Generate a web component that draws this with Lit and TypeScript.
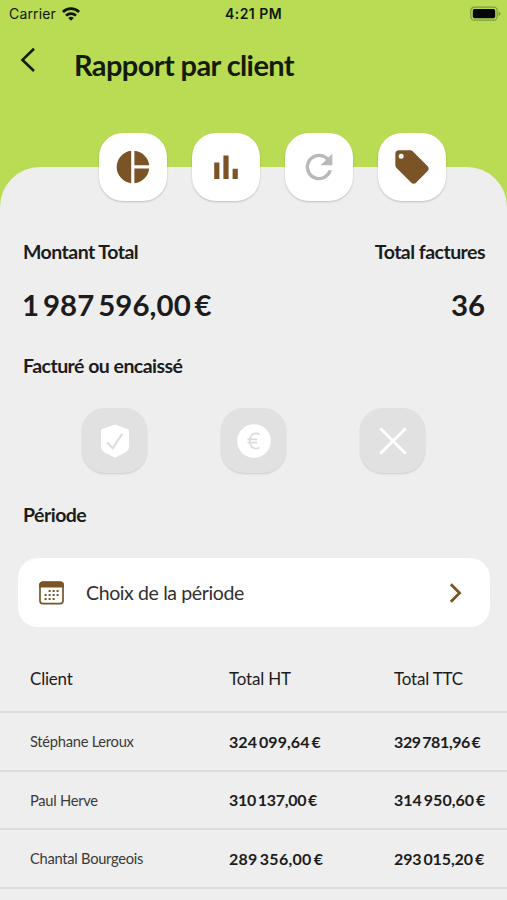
import { LitElement, html, css, svg } from "lit";
import { customElement } from "lit/decorators.js";
import { styleMap } from "lit/directives/style-map.js";

interface Sum {
  text: string;
  tracking: number;
}

const sum = (text: string, tracking: number): Sum => ({ text: text.replace(/ /g, "\u2009"), tracking });

const clients = [
  { name: "Stéphane Leroux", sums: [sum("324 099,64 €", 0.05), sum("329 781,96 €", -0.4)] },
  { name: "Paul Herve", sums: [sum("310 137,00 €", -0.28), sum("314 950,60 €", 0)] },
  { name: "Chantal Bourgeois", sums: [sum("289 356,00 €", 0.25), sum("293 015,20 €", -0.1)] },
];

const calendarDots = [
  [10, 9], [14, 9], [18, 9],
  [6, 13], [10, 13], [14, 13], [18, 13],
  [6, 17], [10, 17], [14, 17],
];

@customElement("app-root")
export class AppRoot extends LitElement {
  static styles = css`
    :host {
      display: block;
      height: 900px;
      overflow: hidden;
      background: #b9dc54;
      color: #1c1c1c;
      font-family: Lato, "Liberation Sans", sans-serif;
      white-space: nowrap;
    }
    * { box-sizing: border-box; }
    svg { display: block; flex: none; }
    .status {
      display: grid;
      grid-template-columns: 1fr auto 1fr;
      align-items: center;
      height: 28px;
      padding: 0 6px;
      color: #10180a;
      font-family: Inter, sans-serif;
      font-size: 14px;
      line-height: 28px;
    }
    .carrier { display: flex; align-items: center; gap: 6px; padding-left: 3px; letter-spacing: 0.15px; }
    .clock { font-weight: 600; letter-spacing: 0.45px; }
    .battery { justify-self: end; }
    .header {
      display: flex;
      align-items: flex-start;
      height: 139px;
      padding: 19px 0 0 20px;
      gap: 38px;
      color: #141c08;
    }
    .title { margin: 0; font-size: 29px; line-height: 36px; font-weight: 700; letter-spacing: -0.6px; }
    .sheet { height: 733px; background: #eee; border-radius: 40px 40px 0 0; }
    .tools { display: flex; gap: 25px; padding-left: 99px; height: 68px; margin-bottom: 4px; transform: translateY(-34px); }
    .tool {
      display: grid; place-items: center;
      width: 68px; height: 68px;
      border-radius: 24px;
      background: #fff;
      color: #7a5426;
      box-shadow: 0 1px 2px rgba(0, 0, 0, 0.2);
    }
    .muted { color: #b9b9b9; }
    .row { display: flex; justify-content: space-between; padding: 0 22px 0 23px; }
    .label { font-size: 19.5px; line-height: 26px; font-weight: 700; letter-spacing: -0.53px; }
    .value { font-size: 29.4px; line-height: 36px; font-weight: 700; margin-top: 22px; }
    .amount { margin-left: -1px; letter-spacing: 0.1px; }
    .space { margin-top: 30px; }
    .filters { display: flex; gap: 74px; padding: 29px 0 0 82px; height: 123px; }
    .filter {
      display: grid; place-items: center;
      width: 65px; height: 65px;
      border-radius: 23px;
      background: #e1e1e1;
      color: #fff;
      box-shadow: 0 1px 2px rgba(0, 0, 0, 0.14);
    }
    .period {
      display: flex; align-items: center;
      height: 69px;
      margin: 30px 17px 0 18px;
      padding: 0 28px 0 21px;
      border-radius: 20px;
      background: #fff;
      color: #7a5426;
    }
    .choice { flex: 1; margin-left: 22px; font-size: 19.5px; color: #303030; letter-spacing: -0.38px; }
    .line {
      display: grid; align-items: center;
      grid-template-columns: 199px 165px 1fr;
      height: 58.5px;
      padding-left: 30px;
      border-bottom: 2px solid #dcdcdc;
      font-size: 16px;
    }
    .head { height: 60px; margin-top: 26px; padding: 0 0 7px 30px; font-size: 17px; letter-spacing: -0.2px; }
    .name { font-size: 14.7px; color: #3a3a3a; letter-spacing: -0.27px; }
    .sum { font-weight: 700; }
  `;

  render() {
    return html`
      <div class="status">
        <div class="carrier">
          <span>Carrier</span>
          <svg width="18" height="14" viewBox="0 0 18 14" fill="none" stroke="currentColor" stroke-width="2.7">
            <path d="M.9 5a11.5 11.5 0 0 1 16.2 0M4 8.6a7.2 7.2 0 0 1 10 0" />
            <path d="M9 13.8 6.2 11a4 4 0 0 1 5.6 0z" fill="currentColor" stroke="none" />
          </svg>
        </div>
        <span class="clock">4:21 PM</span>
        <svg class="battery" width="31" height="16" viewBox="0 0 31 16">
          <rect x=".8" y="1.2" width="26.4" height="13" rx="3.6" fill="none" stroke="#7f983e" stroke-width="1.2" />
          <rect x="2.8" y="3.1" width="22.4" height="9.2" rx="1.8" fill="#050505" />
          <path d="M28.6 5.4q2 .8 2 2.3t-2 2.3z" fill="#7f983e" />
        </svg>
      </div>
      <div class="header">
        <svg width="16" height="26" viewBox="0 0 16 26" fill="none" stroke="currentColor" stroke-width="2.6">
          <path d="M14 1.8 2.5 12.9 14 24" />
        </svg>
        <h1 class="title">Rapport par client</h1>
      </div>
      <main class="sheet">
        <div class="tools">
          <div class="tool">
            <svg width="34" height="34" viewBox="0 0 34 34" fill="currentColor">
              <path d="M15.2.8v32.4a16.3 16.3 0 0 1 0-32.4zM18.4.8a16.3 16.3 0 0 1 14.8 14.5H18.4zM18.4 18.6h14.8a16.3 16.3 0 0 1-14.8 14.6z" />
            </svg>
          </div>
          <div class="tool">
            <svg width="24" height="24" viewBox="0 0 24 24" fill="currentColor">
              <path d="M.2 7.5h5.2V24H.2zM9.4.6h5.2V24H9.4zM18.6 13.8h5.2V24h-5.2z" />
            </svg>
          </div>
          <div class="tool muted">
            <svg width="40" height="40" viewBox="0 0 24 24" fill="currentColor">
              <path d="M17.65 6.35A7.96 7.96 0 0 0 12 4a8 8 0 1 0 7.73 10h-2.08A6 6 0 1 1 12 6c1.66 0 3.14.69 4.22 1.78L13 11h7V4z" />
            </svg>
          </div>
          <div class="tool">
            <svg width="40" height="40" viewBox="0 0 24 24" fill="currentColor">
              <path d="m21.41 11.58-9-9C12.05 2.22 11.55 2 11 2H4c-1.1 0-2 .9-2 2v7c0 .55.22 1.05.59 1.42l9 9c.36.36.86.58 1.41.58s1.05-.22 1.41-.59l7-7c.37-.36.59-.86.59-1.41s-.23-1.06-.59-1.42zM5.5 7a1.5 1.5 0 1 1 0-3 1.5 1.5 0 0 1 0 3z" />
            </svg>
          </div>
        </div>
        <div class="row label"><span>Montant Total</span><span>Total factures</span></div>
        <div class="row value"><span class="amount">1\u2009987\u2009596,00\u2009€</span><span>36</span></div>
        <div class="row label space"><span>Facturé ou encaissé</span></div>
        <div class="filters">
          <div class="filter">
            <svg width="28" height="34" viewBox="0 0 28 34">
              <path d="M14 .5 26.6 5q1.4.6 1.4 2v16q0 3-3 5L14 33.8 3 28q-3-2-3-5V7q0-1.4 1.4-2z" fill="currentColor" />
              <path d="M6.2 18.2l5.5 6L21.4 9.6" fill="none" stroke="#dedede" stroke-width="2.2" />
            </svg>
          </div>
          <div class="filter">
            <svg width="34" height="34" viewBox="0 0 34 34">
              <circle cx="17" cy="17" r="16.8" fill="currentColor" />
              <path d="M22.6 10.4q-1.6-1-3.6-1c-4 0-6.2 3.2-6.2 7.6s2.200 7.600 6.200 7.600q2 0 3.600-1M10.400 15.300h9.600M10.400 18.600h9.600" fill="none" stroke="#dcdcdc" stroke-width="1.8" />
            </svg>
          </div>
          <div class="filter">
            <svg width="28" height="28" viewBox="0 0 28 28" fill="none" stroke="currentColor" stroke-width="2.8">
              <path d="m1.200 1.200 25.600 25.600M26.800 1.200 1.200 26.800" />
            </svg>
          </div>
        </div>
        <div class="row label"><span>Période</span></div>
        <div class="period">
          <svg width="25" height="24" viewBox="0 0 25 24">
            <rect x="1" y="1.200" width="23" height="21.400" rx="2.800" fill="none" stroke="currentColor" stroke-width="1.700" />
            <path d="M.2 6.400V4q0-3.200 3.200-3.200h18.200q3.200 0 3.200 3.200v2.400z" fill="currentColor" />
            ${calendarDots.map(([x, y]) => svg`<rect x=${x - 0.4} y=${y} width="2" height="2" fill="currentColor" />`)}
          </svg>
          <span class="choice">Choix de la période</span>
          <svg width="13" height="20" viewBox="0 0 13 20" fill="none" stroke="currentColor" stroke-width="2.800">
            <path d="m1.800 1.200 8.800 8.800-8.800 8.800" />
          </svg>
        </div>
        <div class="line head"><span>Client</span><span>Total HT</span><span>Total TTC</span></div>
        ${clients.map(
          ({ name, sums }) => html`<div class="line">
            <span class="name">${name}</span>
            ${sums.map(
              (s) => html`<span class="sum" style=${styleMap({ letterSpacing: `${s.tracking}px` })}>${s.text}</span>`
            )}
          </div>`
        )}
      </main>
    `;
  }
}
